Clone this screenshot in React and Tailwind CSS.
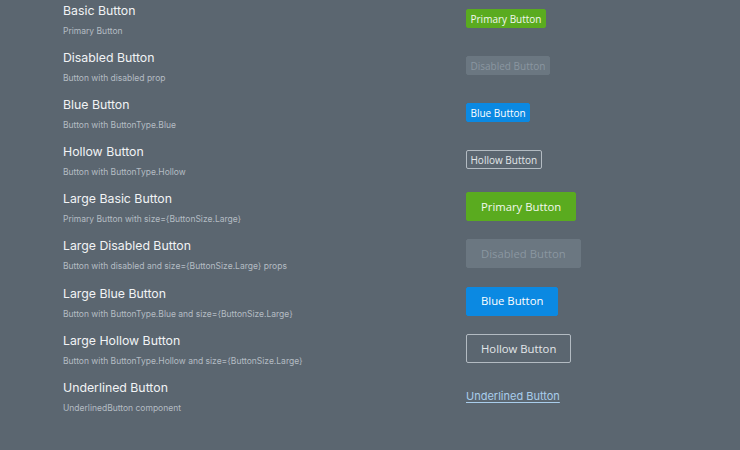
const rows = [
  { title: "Basic Button", desc: "Primary Button", kind: "primary", size: "sm", label: "Primary Button" },
  { title: "Disabled Button", desc: "Button with disabled prop", kind: "disabled", size: "sm", label: "Disabled Button" },
  { title: "Blue Button", desc: "Button with ButtonType.Blue", kind: "blue", size: "sm", label: "Blue Button" },
  { title: "Hollow Button", desc: "Button with ButtonType.Hollow", kind: "hollow", size: "sm", label: "Hollow Button" },
  { title: "Large Basic Button", desc: "Primary Button with size={ButtonSize.Large}", kind: "primary", size: "lg", label: "Primary Button" },
  { title: "Large Disabled Button", desc: "Button with disabled and size={ButtonSize.Large} props", kind: "disabled", size: "lg", label: "Disabled Button" },
  { title: "Large Blue Button", desc: "Button with ButtonType.Blue and size={ButtonSize.Large}", kind: "blue", size: "lg", label: "Blue Button" },
  { title: "Large Hollow Button", desc: "Button with ButtonType.Hollow and size={ButtonSize.Large}", kind: "hollow", size: "lg", label: "Hollow Button" },
  { title: "Underlined Button", desc: "UnderlinedButton component", kind: "underlined", label: "Underlined Button" },
];

const kindClass = {
  primary: "bg-[#5aab1f] border-[#5aab1f] text-[#f2f8ee]",
  disabled: "bg-[#6b7781] border-[#6b7781] text-[#8a96a0]",
  blue: "bg-[#0b89e2] border-[#0b89e2] text-white",
  hollow: "bg-transparent border-[#b3bbc2] text-[#e3e7ea]",
};

function DemoButton({ kind, size, label }) {
  if (kind === "underlined") {
    return (
      <button className="mt-[9px] text-[11px] leading-[14px] text-[#a9cdeb] underline underline-offset-2 decoration-[#a9cdeb] font-['Inter',sans-serif]">
        {label}
      </button>
    );
  }
  const sizeClass =
    size === "lg"
      ? "mt-[1px] h-[29px] px-[14px] text-[11.3px]"
      : "mt-[6px] h-[19px] px-[3.5px] text-[10px]";
  return (
    <button
      disabled={kind === "disabled"}
      className={`border rounded-[2px] font-['Open_Sans',sans-serif] leading-none ${sizeClass} ${kindClass[kind]}`}
    >
      {label}
    </button>
  );
}

export default function App() {
  return (
    <div className="w-[740px] h-[450px] bg-[#5b6670] overflow-hidden pt-[3px] pl-[63px] font-['Inter',sans-serif]">
      {rows.map((r) => (
        <div key={r.title} className="flex h-[47.1px] items-start">
          <div className="w-[403px] shrink-0">
            <div className="text-[12.3px] leading-4 text-[#f1f3f5]">{r.title}</div>
            <div className="mt-[6px] text-[8.5px] leading-3 text-[#b4bcc3]">{r.desc}</div>
          </div>
          <DemoButton kind={r.kind} size={r.size} label={r.label} />
        </div>
      ))}
    </div>
  );
}
